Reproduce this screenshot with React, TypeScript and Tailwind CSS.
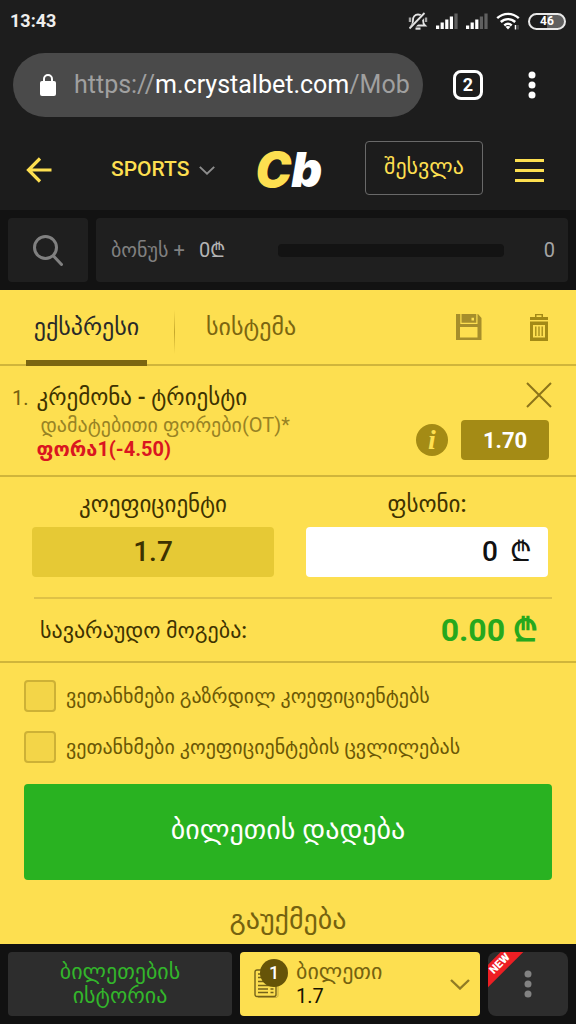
import type { ReactNode } from 'react';

const CURRENCY = '₾';

function MutedBellIcon() {
  return (
    <svg viewBox="0 0 20 20" className="h-5 w-5" fill="none" stroke="#e4e4e4" strokeWidth="1.8">
      <path d="M4 14.5h13c-1.5-1.3-2-2.5-2-5.500 0-3-1.900-5.500-5-5.500s-5 2.500-5 5.500c0 3-.2 4.200-1.400 5.500z" />
      <path d="M7.500 17.600h5" strokeWidth="2.200" />
      <path d="M2 6.500v4.500M18 6.500v4.500" stroke="#a5a5a5" strokeWidth="2.400" />
      <path d="M2 18.500 17.500 2.500" stroke="#1d1d1d" strokeWidth="4.500" />
      <path d="M1.500 17.500 16.500 2" />
    </svg>
  );
}

function SignalIcon({ strength }: { strength: number }) {
  return (
    <svg viewBox="0 0 22 16" className="h-4 w-[22px]">
      {[0, 1, 2, 3, 4].map((i) => (
        <rect key={i} x={i * 4.6} y={12.500 - i * 3} width="3.2" height={3.500 + i * 3} fill={i < strength ? '#ffffff' : '#606060'} />
      ))}
    </svg>
  );
}

function WifiIcon() {
  return (
    <svg viewBox="0 0 24 18" className="h-[18px] w-6" fill="none" stroke="#ffffff" strokeWidth="2.400">
      <path d="M1.200 6.200c6.200-5.800 15.400-5.800 21.600 0M4.800 10c4.200-3.900 10.200-3.900 14.400 0M8.300 13.500c2.200-2 5.200-2 7.400 0" />
      <path d="m9.500 14.800 2.500 2.700 2.500-2.700c-1.500-1.200-3.500-1.200-5 0z" fill="#ffffff" stroke="none" />
      <path d="M19.500 13v4.500" strokeWidth="1.500" />
      <path d="M22 13v4.500" stroke="#555" strokeWidth="1.500" />
    </svg>
  );
}

function Chevron({ className }: { className: string }) {
  return (
    <svg viewBox="0 0 20 11" className={className} fill="none" stroke="currentColor" strokeWidth="2.400">
      <path d="m1 1 9 8.500L19 1" />
    </svg>
  );
}

function Dots({ className }: { className: string }) {
  return (
    <svg viewBox="0 0 8 28" className={className} fill="currentColor">
      <circle cx="4" cy="4" r="3.500" />
      <circle cx="4" cy="14" r="3.500" />
      <circle cx="4" cy="24" r="3.500" />
    </svg>
  );
}

function SaveIcon() {
  return (
    <svg viewBox="0 0 26 26" className="h-[26px] w-[26px]">
      <path fill="#a68e2b" fillRule="evenodd" d="M0 0h22l3.500 4v22H0zM4 13v10.500h17.500V13z" />
      <path fill="#fddf50" d="M4.300 0h1.200v8.800h14.800V0h1.200v10H4.300zM15.500 3.800H18v2.700h-2.500z" />
    </svg>
  );
}

function TrashIcon() {
  return (
    <svg viewBox="0 0 18 27" className="h-[27px] w-[18px]">
      <path fill="#a38a16" fillRule="evenodd" d="M5 0h8v3h5v3H0V3h5zm1.500 1.300V3h5V1.300zM0 7.500h18V27H0zM3 11v12.500h12V11z" />
      <path fill="none" stroke="#a38a16" strokeWidth="1.300" d="M5.800 12.500V22M9 12.500V22M12.200 12.500V22" />
    </svg>
  );
}

function TicketIcon() {
  return (
    <svg viewBox="0 0 26 30" className="h-[30px] w-[26px]" fill="none" stroke="#74621a">
      <path d="M24 12v14.500c0 1.200-1 2-2 2H4" stroke="#c7ae3c" />
      <rect x="1" y="1" width="21" height="26.500" rx="2" strokeWidth="1.400" />
      <path d="M4 5h12M4 8.500h10M4 12.500h10M4 16.500h13M4 20h10M4 23.500h10M16.500 20h3M16.500 23.500h3" strokeWidth="1.500" />
    </svg>
  );
}

function StatusBar() {
  return (
    <div className="flex h-[42px] items-center justify-between px-2.5">
      <span className="text-lg font-bold text-[#eeeeee]">13:43</span>
      <div className="flex items-center gap-2">
        <MutedBellIcon />
        <SignalIcon strength={4} />
        <SignalIcon strength={3} />
        <WifiIcon />
        <span className="flex h-[17px] w-[38px] items-center justify-center rounded-full border-2 border-[#e8e8e8] bg-[linear-gradient(90deg,#1d1d1d_50%,#606060_50%)] text-xs font-bold text-white">
          46
        </span>
      </div>
    </div>
  );
}

function BrowserBar() {
  return (
    <div className="flex h-[88px] items-center pb-0.5 pl-[13px] pr-10">
      <div className="flex h-16 min-w-0 flex-1 items-center rounded-full bg-[#4a4a4a] pl-[27px] pr-2">
        <svg viewBox="0 0 16 22" className="h-[22px] w-4 shrink-0">
          <rect y="7" width="16" height="15" rx="2" fill="#ffffff" />
          <path d="M4 8V5a4 4 0 0 1 8 0v3" fill="none" stroke="#ffffff" strokeWidth="2" />
        </svg>
        <p className="ml-[18px] min-w-0 overflow-hidden whitespace-nowrap text-[25px] leading-9 text-[#a0a0a0]">
          https://<span className="text-white">m.crystalbet.com</span>/Mob
        </p>
      </div>
      <button type="button" aria-label="Tabs" className="ml-[30px] flex h-[30px] w-[30px] items-center justify-center rounded-lg border-3 border-white text-lg font-bold text-white">
        2
      </button>
      <button type="button" aria-label="Menu" className="ml-[45px] text-white">
        <Dots className="h-7 w-2" />
      </button>
    </div>
  );
}

function SiteHeader() {
  return (
    <header className="flex h-20 items-center bg-[#1c1c1c] pl-[26px] pr-8">
      <button type="button" aria-label="Back">
        <svg viewBox="0 0 26 26" className="h-[26px] w-[26px]" fill="none" stroke="#fddf50" strokeWidth="3.200">
          <path d="M25.500 13H2.500M14 1.500 2.500 13 14 24.500" />
        </svg>
      </button>
      <button type="button" className="ml-[59px] flex items-center gap-2.5 text-[21px] font-medium text-[#fddf50]">
        SPORTS
        <Chevron className="h-[9px] w-4 text-[#8d8d8d]" />
      </button>
      <a href="#" aria-label="Cb" className="ml-10 font-[Inter,sans-serif] text-[48px] leading-none font-black text-[#fddf50] italic">
        C<span className="text-white">b</span>
      </a>
      <div className="flex-1" />
      <button type="button" className="mb-1 h-[54px] w-[118px] rounded-sm border border-[#696969] pb-1 text-[22px] font-medium text-[#fddf50]">
        შესვლა
      </button>
      <button type="button" aria-label="Open menu" className="ml-8 flex w-[29px] flex-col gap-[7px]">
        <span className="h-[3px] w-full bg-[#fddf50]" />
        <span className="h-[3px] w-full bg-[#fddf50]" />
        <span className="h-[3px] w-full bg-[#fddf50]" />
      </button>
    </header>
  );
}

function BonusBar() {
  return (
    <div className="flex h-20 gap-2 bg-[#121212] p-2">
      <button type="button" aria-label="Search" className="flex w-20 items-center justify-center rounded bg-[#1f1f1f]">
        <svg viewBox="0 0 30 31" className="h-[31px] w-[30px]" fill="none" stroke="#808080" strokeWidth="3" strokeLinecap="round">
          <circle cx="12.500" cy="12.500" r="11" />
          <path d="m20.500 21 8 8.500" />
        </svg>
      </button>
      <div className="flex flex-1 items-center rounded bg-[#1f1f1f] pl-[15px] pr-[13px]">
        <span className="w-[88px] whitespace-nowrap text-xl text-[#808080]">ბონუს +</span>
        <span className="text-xl text-[#b4b4b4]">0{CURRENCY}</span>
        <span className="ml-auto h-[13px] w-[226px] rounded bg-[#131313]" />
        <span className="ml-10 text-xl text-[#a5a5a5]">0</span>
      </div>
    </div>
  );
}

function SlipTabs() {
  return (
    <div className="flex h-[76px] border-b-2 border-[#d0b53b] pr-7 pl-[26px]">
      <button type="button" className="-mb-0.5 w-[121px] border-b-6 border-[#7b6610] pt-1 text-2xl font-medium text-[#292a29]">
        ექსპრესი
      </button>
      <div className="mt-5 ml-[27px] h-11 w-px bg-linear-to-b from-transparent via-[#c5a72b] to-transparent" />
      <button type="button" className="ml-[31px] text-2xl font-medium text-[#7b6610]">
        სისტემა
      </button>
      <div className="ml-auto flex items-center gap-12">
        <button type="button" aria-label="Save">
          <SaveIcon />
        </button>
        <button type="button" aria-label="Delete">
          <TrashIcon />
        </button>
      </div>
    </div>
  );
}

function SlipEvent() {
  return (
    <div className="flex h-[111px] justify-between border-b-2 border-[#d0b53b] pt-4 pr-6 pl-3">
      <div className="flex gap-2">
        <span className="text-xl leading-8 text-[#75620f]">1.</span>
        <div className="whitespace-nowrap">
          <p className="text-[23px] leading-8 font-medium text-[#3d3200]">კრემონა - ტრიესტი</p>
          <p className="pl-1 text-[20px] leading-[22px] text-[#988324]">დამატებითი ფორები(OT)*</p>
          <p className="text-[20px] leading-[26px] font-bold text-[#da1620]">ფორა1(-4.50)</p>
        </div>
      </div>
      <div className="flex flex-col items-end">
        <button type="button" aria-label="Remove">
          <svg viewBox="0 0 26 26" className="h-[26px] w-[26px]" fill="none" stroke="#8c741a" strokeWidth="2">
            <path d="m1 1 24 24M25 1 1 25" />
          </svg>
        </button>
        <div className="mt-3 mr-[3px] flex items-center gap-[13px]">
          <button type="button" aria-label="Info" className="flex h-8 w-8 items-center justify-center rounded-full bg-[#a48b15] font-['Liberation_Serif',serif] text-[28px] leading-none font-bold text-[#fddf50] italic">
            i
          </button>
          <span className="flex h-10 w-[88px] items-center justify-center rounded bg-[#a48b15] text-[22px] font-bold text-white">1.70</span>
        </div>
      </div>
    </div>
  );
}

function StakeForm() {
  return (
    <div className="border-b-2 border-[#d0b53b] pt-3.5">
      <div className="grid grid-cols-2 gap-8 pr-7 pl-8 text-[23px] font-medium text-[#3d3200]">
        <div className="flex flex-col">
          <span className="h-9 text-center leading-7">კოეფიციენტი</span>
          <output className="flex h-[50px] items-center justify-center rounded bg-[#e6c935] text-[28px]">1.7</output>
        </div>
        <div className="flex flex-col">
          <label htmlFor="stake" className="h-9 text-center leading-7">
            ფსონი:
          </label>
          <div className="flex h-[50px] items-center rounded bg-white pr-4 text-[28px] text-[#111111]">
            <input id="stake" defaultValue="0" inputMode="decimal" className="w-full min-w-0 flex-1 bg-transparent text-right outline-none" />
            <span className="ml-3">{CURRENCY}</span>
          </div>
        </div>
      </div>
      <div className="mt-5 mr-6 ml-[34px] flex h-16 items-center justify-between border-t-2 border-[#dfc246] pr-3.5 pl-1.5">
        <span className="text-[22px] font-medium text-[#3d3200]">სავარაუდო მოგება:</span>
        <span className="text-[32px] font-bold text-[#26a81d]">0.00 {CURRENCY}</span>
      </div>
    </div>
  );
}

function ConsentRow({ children }: { children: ReactNode }) {
  return (
    <label className="flex items-center gap-2.5 whitespace-nowrap text-[20px] leading-8 font-medium text-[#6b5805]">
      <input type="checkbox" className="h-8 w-8 shrink-0 appearance-none rounded border-2 border-[#cdb136] bg-[#f3d548]" />
      {children}
    </label>
  );
}

function BottomNav() {
  return (
    <nav className="flex h-20 gap-2 bg-[#111111] p-2">
      <button type="button" className="w-56 rounded bg-[#2d2d2d] px-8 text-[22px] leading-6 font-medium text-[#33b62b]">
        ბილეთების ისტორია
      </button>
      <button type="button" className="flex flex-1 items-center rounded bg-[#fddf50] pr-2.5 pl-3.5 text-left">
        <span className="relative">
          <TicketIcon />
          <span className="absolute -top-2.5 left-1.5 flex h-7 w-7 items-center justify-center rounded-full bg-[#665408] text-lg font-medium text-white">1</span>
        </span>
        <span className="ml-4 flex-1 text-[22px] leading-6 font-medium text-[#75620f]">
          ბილეთი
          <span className="block text-xl leading-6 font-normal text-[#171300]">1.7</span>
        </span>
        <Chevron className="h-[11px] w-5 text-[#907b24]" />
      </button>
      <button type="button" aria-label="More" className="relative flex w-20 items-center justify-center overflow-hidden rounded-lg bg-[#2d2d2d] text-[#828282]">
        <Dots className="h-7 w-2" />
        <span className="absolute top-1 -left-6 w-[72px] -rotate-45 bg-[#ed1f24] text-center text-[11px] leading-4 font-black text-white">NEW</span>
      </button>
    </nav>
  );
}

export default function App() {
  return (
    <div className="flex min-h-screen flex-col bg-[#1d1d1d] font-[Roboto,'DejaVu_Sans',sans-serif]">
      <StatusBar />
      <BrowserBar />
      <SiteHeader />
      <BonusBar />
      <main className="flex flex-1 flex-col bg-[#fddf50]">
        <SlipTabs />
        <SlipEvent />
        <StakeForm />
        <div className="flex flex-col gap-[19px] px-6 pt-[17px]">
          <ConsentRow>ვეთანხმები გაზრდილ კოეფიციენტებს</ConsentRow>
          <ConsentRow>ვეთანხმები კოეფიციენტების ცვლილებას</ConsentRow>
        </div>
        <div className="flex flex-col px-6 pt-[21px]">
          <button type="button" className="h-24 rounded bg-[#29b221] pb-1 text-[28px] font-medium text-white">
            ბილეთის დადება
          </button>
          <button type="button" className="h-16 pt-4 text-[28px] leading-10 font-medium text-[#75620f]">
            გაუქმება
          </button>
        </div>
      </main>
      <BottomNav />
    </div>
  );
}
